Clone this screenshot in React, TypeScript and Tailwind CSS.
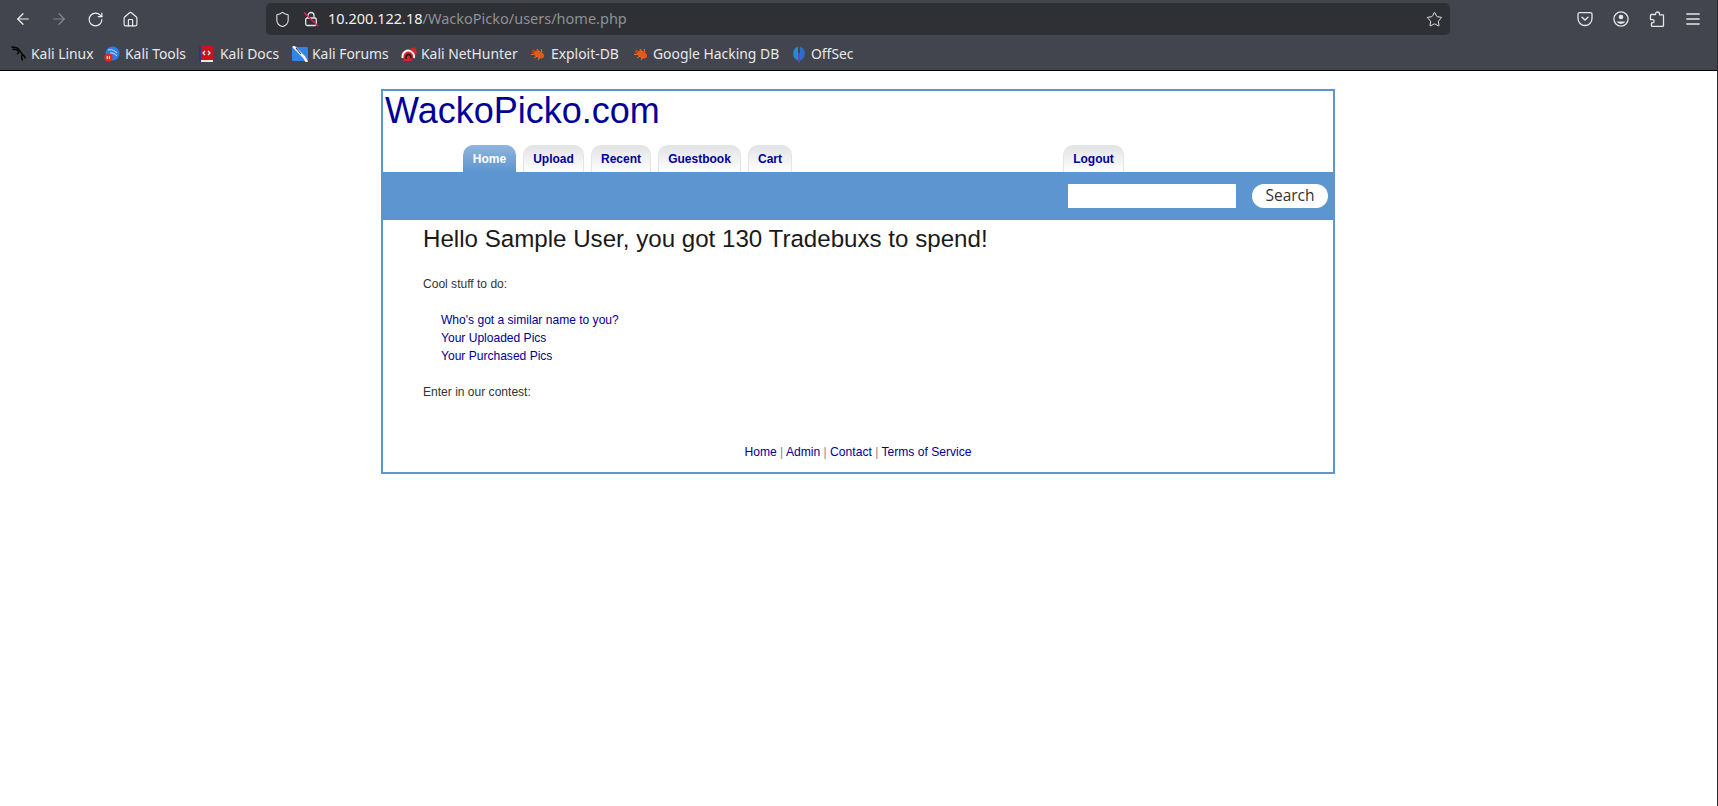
import React from "react";
import { ArrowLeft, ArrowRight, RotateCw, House, Shield, Star } from "lucide-react";

const KaliIcon = () => (
  <svg width="17" height="17" viewBox="0 0 16 16" fill="none" stroke="#050505" strokeWidth="1.500">
    <path d="M0.500 1.500c3 0 6 .8 7.500 2.500 1.500 1.700 2 3.500 3 4.500 1 1 2.500 1.500 3.500 4.500M1.500 4c2.500-.5 5 .5 6 2 .7 1.200-.5 2-1.500 2.500M11 9.500c-.5 1.500-.5 3 .5 5.500" />
  </svg>
);

const ToolsIcon = () => (
  <svg width="16" height="16" viewBox="0 0 16 16" fill="none">
    <circle cx="8.500" cy="7.500" r="7" fill="#2f7de1" />
    <path d="M4 4c3-1 6 0 9 3M6 7c2-.5 5 .5 7 3" stroke="#dceafc" strokeWidth="1" />
    <circle cx="4.500" cy="11.500" r="4" fill="#e02b20" />
    <path d="M3.300 10v3M5.500 10v3" stroke="#fff" strokeWidth="1.100" />
  </svg>
);

const DocsIcon = () => (
  <svg width="14" height="16" viewBox="0 0 14 16">
    <rect x="0" y="0" width="14" height="16" fill="#c4161c" />
    <rect x="0" y="0" width="2" height="16" fill="#2b3a7a" />
    <rect x="2" y="14" width="12" height="2" fill="#e8e8e8" />
    <path d="M6 5 4 7l2 2M9 5l2 2-2 2" stroke="#fff" strokeWidth="1.200" fill="none" />
  </svg>
);

const ForumsIcon = () => (
  <svg width="16" height="16" viewBox="0 0 16 16">
    <rect x="0" y="1" width="16" height="14" rx="1.500" fill="#2f86e8" />
    <path d="M1 0 7 6l5 5 3 5" stroke="#f2f2f2" strokeWidth="2.600" fill="none" />
    <path d="M4 2l5 6" stroke="#20242b" strokeWidth="1" />
  </svg>
);

const NetHunterIcon = () => (
  <svg width="16" height="16" viewBox="0 0 16 16" fill="none">
    <path d="M0 7 14 1l2 6-6 8H3z" fill="#d9252a" />
    <path d="M1.500 12C1 6 6 3 10 5.500c2.500 1.500 3.500 4 3 6.500" stroke="#f3f3f3" strokeWidth="2" />
    <path d="M5 13c-.5-3 1-5 3-4.500 1.500.3 2 2 2 4" stroke="#15171b" strokeWidth="1.500" />
  </svg>
);

const BugIcon = () => (
  <svg width="16" height="16" viewBox="0 0 16 16" fill="none">
    <ellipse cx="9" cy="8.500" rx="5.500" ry="3.400" transform="rotate(28 9 8.500)" fill="#e2591a" />
    <circle cx="3.500" cy="5.500" r="1.800" fill="#b8420f" />
    <path d="M1 8.500 5 8M4 12l3-2M8 14l2-3M7 3l2 3M11 3l1 3" stroke="#ef7a2e" strokeWidth="1" />
  </svg>
);

const OffSecIcon = () => (
  <svg width="16" height="18" viewBox="0 0 16 18">
    <path d="M7 1.500A7.500 7.500 0 0 0 7 15.500z" fill="#1f8fd0" />
    <path d="M9 1.500A7.500 7.500 0 0 1 9 15.500z" fill="#2a6fd0" />
    <rect x="7" y="8" width="2" height="9.500" fill="#6a3fc0" />
  </svg>
);

const PocketIcon = () => (
  <svg width="16" height="16" viewBox="0 0 16 16" fill="none" stroke="#e4e5e8" strokeWidth="1.300">
    <path d="M2.500 1.700h11A1.500 1.500 0 0 1 15 3.200v4.300a7 7 0 0 1-14 0V3.200a1.500 1.500 0 0 1 1.500-1.500z" />
    <path d="m5 6.200 3 2.800 3-2.800" strokeLinecap="round" strokeLinejoin="round" strokeWidth="1.500" />
  </svg>
);

const AccountIcon = () => (
  <svg width="16" height="16" viewBox="0 0 16 16" fill="none">
    <circle cx="8" cy="8" r="7.100" stroke="#e4e5e8" strokeWidth="1.300" />
    <circle cx="8" cy="6" r="2.300" fill="#e4e5e8" />
    <path d="M3.500 10.500h9a5.400 5.400 0 0 1-9 0z" fill="#e4e5e8" />
  </svg>
);

const ExtensionIcon = () => (
  <svg width="16" height="16" viewBox="0 0 16 16" fill="none" stroke="#e4e5e8" strokeWidth="1.300" strokeLinejoin="round">
    <path d="M6.500 3.500V3a2 2 0 0 1 4 0v.800h3.200a.8.8 0 0 1 .8.800v10a.8.8 0 0 1-.8.800H3.300a.8.8 0 0 1-.8-.8v-2.800H3.500a1.600 1.600 0 0 0 0-3.200H1.500V4.300a.8.8 0 0 1 .8-.8z" />
  </svg>
);

const MenuLines = () => (
  <svg width="16" height="16" viewBox="0 0 16 16" fill="none" stroke="#e4e5e8" strokeWidth="1.300" strokeLinecap="round">
    <path d="M1.800 3h12.400M1.800 8h12.400M1.800 13h12.400" />
  </svg>
);

const UnsecureLock = () => (
  <svg width="16" height="16" viewBox="0 0 16 16" fill="none">
    <path d="M5 7V4.500a3 3 0 0 1 6 0V7" stroke="#e4e5e8" strokeWidth="1.300" />
    <rect x="2.700" y="7" width="10.600" height="7.500" rx="1.500" stroke="#e4e5e8" strokeWidth="1.300" />
    <path d="M1 1.500 15 15" stroke="#e0245e" strokeWidth="1.400" />
  </svg>
);

const bookmarks = [
  { label: "Kali Linux", icon: <KaliIcon />, gap: "gap-[4px]", width: "w-[93px]" },
  { label: "Kali Tools", icon: <ToolsIcon />, gap: "gap-[5px]", width: "w-[95px]" },
  { label: "Kali Docs", icon: <DocsIcon />, gap: "gap-[5px]", width: "w-[93px]" },
  { label: "Kali Forums", icon: <ForumsIcon />, gap: "gap-[4px]", width: "w-[109px]" },
  { label: "Kali NetHunter", icon: <NetHunterIcon />, gap: "gap-[4px]", width: "w-[129px]" },
  { label: "Exploit-DB", icon: <BugIcon />, gap: "gap-[5px]", width: "w-[103px]" },
  { label: "Google Hacking DB", icon: <BugIcon />, gap: "gap-[4px]", width: "w-[158px]" },
  { label: "OffSec", icon: <OffSecIcon />, gap: "gap-[4px]", width: "w-[70px]" },
];

const tabs = [
  { label: "Home", width: "w-[53px]", active: true },
  { label: "Upload", width: "w-[61px]" },
  { label: "Recent", width: "w-[60px]" },
  { label: "Guestbook", width: "w-[83px]" },
  { label: "Cart", width: "w-[44px]" },
];

const Tab = ({ label, width, active }: { label: string; width: string; active?: boolean }) => (
  <a
    className={`${width} h-[27px] rounded-t-[10px] flex items-center justify-center text-[12px] font-bold ${
      active
        ? "bg-gradient-to-b from-[#8fb5dd] to-[#5d95d0] text-white"
        : "bg-gradient-to-b from-[#e2e3e6] to-white border border-b-0 border-[#e4e4e4] text-[#000099]"
    }`}
  >
    {label}
  </a>
);

const App: React.FC = () => {
  return (
    <div className="min-h-[806px] bg-white font-['Liberation_Sans',Arial,sans-serif] border-r border-[#2a2a2e]">
      {/* Browser chrome */}
      <div className="h-[71px] bg-[#42454e] border-b border-black font-['Noto_Sans',sans-serif]">
        <div className="h-[38px] flex items-center">
          <div className="w-[266px] flex items-center pl-[14px] gap-[18px]">
            <ArrowLeft size={18} strokeWidth={1.6} className="text-[#f0f0f2]" />
            <ArrowRight size={18} strokeWidth={1.6} className="text-[#85878d]" />
            <RotateCw size={17} strokeWidth={1.6} className="ml-[1px] text-[#f0f0f2]" />
            <House size={17} strokeWidth={1.6} className="text-[#f0f0f2]" />
          </div>
          <div className="w-[1184px] h-[32px] rounded-[5px] bg-[#2f3036] flex items-center pl-[8px]">
            <Shield size={17} strokeWidth={1.5} className="text-[#e4e5e8]" />
            <div className="ml-[12px]">
              <UnsecureLock />
            </div>
            <span className="ml-[9px] text-[14.5px] text-[#f0f0f2]">
              10.200.122.18<span className="text-[#8e9096]">/WackoPicko/users/home.php</span>
            </span>
            <Star size={17} strokeWidth={1.4} className="ml-auto mr-[7px] text-[#e4e5e8]" />
          </div>
          <div className="ml-auto flex items-center gap-[20px] mr-[16px]">
            <PocketIcon />
            <AccountIcon />
            <ExtensionIcon />
            <MenuLines />
          </div>
        </div>
        <div className="h-[32px] flex items-center pl-[11px]">
          {bookmarks.map((b) => (
            <div key={b.label} className={`flex items-center shrink-0 ${b.gap} ${b.width}`}>
              <span className="w-[16px] flex justify-start shrink-0">{b.icon}</span>
              <span className="text-[13.9px] text-[#e6e8ea] whitespace-nowrap">{b.label}</span>
            </div>
          ))}
        </div>
      </div>

      {/* Page */}
      <div className="w-[954px] h-[385px] ml-[381px] mt-[18px] border-2 border-[#5d95d0] flex flex-col">
        <div className="text-[36px] leading-[40px] text-[#000099] pl-[2px]">WackoPicko.com</div>
        <div className="flex mt-[14px] pl-[80px] h-[27px]">
          <div className="flex gap-[7px]">
            {tabs.map((t) => (
              <Tab key={t.label} label={t.label} width={t.width} active={t.active} />
            ))}
          </div>
          <div className="ml-[271px]">
            <Tab label="Logout" width="w-[61px]" />
          </div>
        </div>
        <div className="h-[48px] bg-[#5d95d0] flex items-start pt-[12px] justify-end pr-[5px]">
          <input className="w-[168px] h-[24px] bg-white" />
          <button className="ml-[16px] w-[76px] h-[24px] rounded-[12px] bg-white text-[15.5px] leading-none text-[#333] font-['Open_Sans',sans-serif]">
            Search
          </button>
        </div>
        <div className="pl-[40px] flex-1 flex flex-col text-[12.05px] text-[#333]">
          <h1 className="text-[24.13px] leading-[28px] mt-[5px] text-[#1a1a1a]">
            Hello Sample User, you got 130 Tradebuxs to spend!
          </h1>
          <p className="mt-[22px] leading-[18px]">Cool stuff to do:</p>
          <div className="mt-[18px] pl-[18px] leading-[18px] text-[#000099]">
            <a className="block">Who's got a similar name to you?</a>
            <a className="block">Your Uploaded Pics</a>
            <a className="block">Your Purchased Pics</a>
          </div>
          <p className="mt-[18px] leading-[18px]">Enter in our contest:</p>
        </div>
        <div className="text-center text-[12.1px] leading-[18px] text-[#888] mb-[11px]">
          <a className="text-[#000099]">Home</a> | <a className="text-[#000099]">Admin</a> |{" "}
          <a className="text-[#000099]">Contact</a> | <a className="text-[#000099]">Terms of Service</a>
        </div>
      </div>
    </div>
  );
};

export default App;
